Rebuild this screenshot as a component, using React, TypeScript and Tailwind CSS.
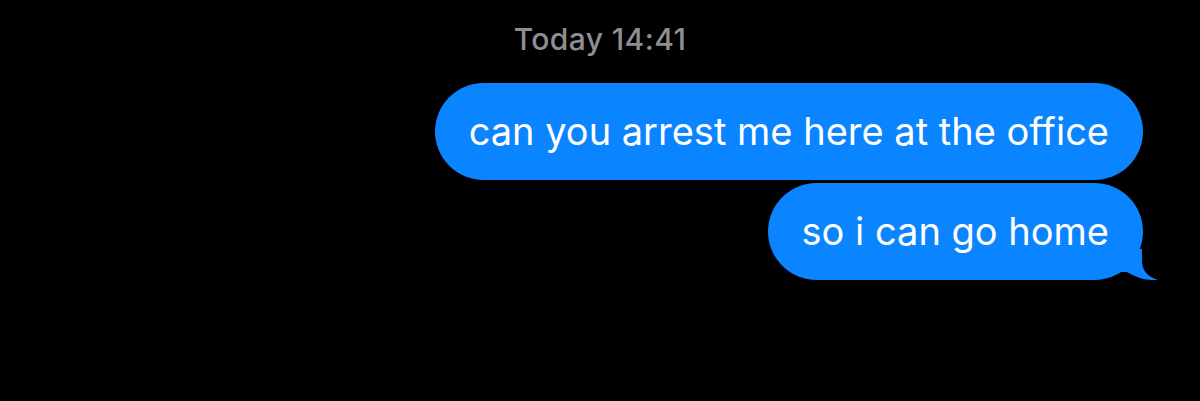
export default function App() {
  return (
    <div
      className="w-[1200px] h-[401px] bg-black flex flex-col overflow-hidden"
      style={{ fontFamily: 'Inter, "Liberation Sans", sans-serif' }}
    >
      <div className="pt-[21px] h-[83px] text-center text-[30px] leading-[36px] font-medium text-[#8e8e93] tracking-[0.4px]">
        Today 14:41
      </div>

      <div className="flex flex-col items-end gap-[3px] pr-[57px]">
        <div className="h-[97px] px-[34px] flex items-center rounded-full bg-[#0a84ff] text-white text-[38px]">
          can you arrest me here at the office
        </div>
        <div className="relative">
          <div className="h-[97px] px-[34px] flex items-center rounded-full bg-[#0a84ff] text-white text-[38px]">
            so i can go home
          </div>
          <svg
            className="absolute -right-[16px] bottom-0"
            width="40"
            height="31"
            viewBox="0 0 40 31"
          >
            <path
              d="M0 0 L23 0 L23 12 Q23 26 39 31 Q22 32 8 23 L0 23 Z"
              fill="#0a84ff"
            />
          </svg>
        </div>
      </div>
    </div>
  );
}
